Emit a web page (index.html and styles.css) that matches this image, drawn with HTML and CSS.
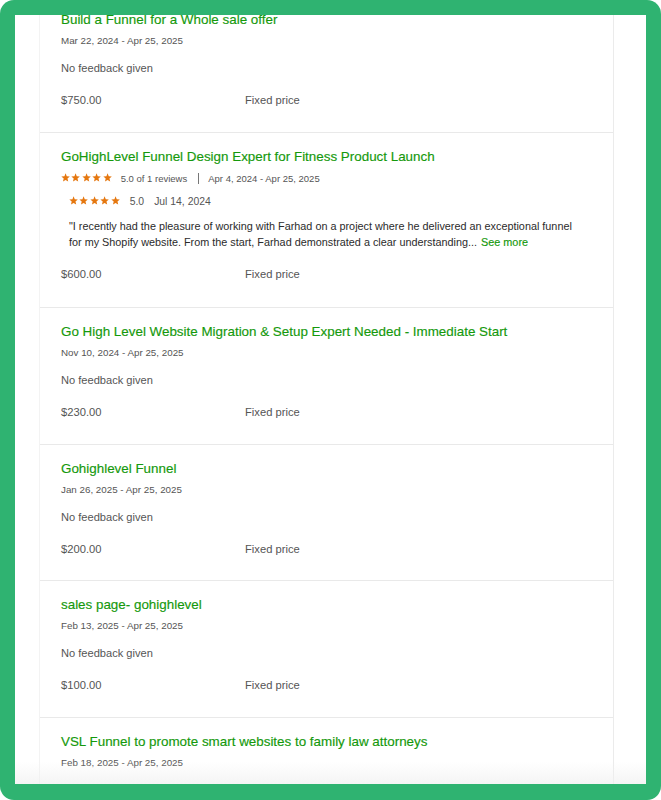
FILE: index.html
```html
<!DOCTYPE html>
<html lang="en">
<head>
<meta charset="utf-8">
<title>Work history</title>
<link rel="stylesheet" href="styles.css">
</head>
<body>
<div class="frame">
  <div class="viewport">
    <div class="card">
      <div class="item">
        <div class="title">Build a Funnel for a Whole sale offer</div>
        <div class="date">Mar 22, 2024 - Apr 25, 2025</div>
        <div class="feedback">No feedback given</div>
        <div class="price-row"><span class="price">$750.00</span><span class="type">Fixed price</span></div>
      </div>

      <div class="item review-item">
        <div class="title">GoHighLevel Funnel Design Expert for Fitness Product Launch</div>
        <div class="meta">
          <span class="stars">
            <svg viewBox="0 0 10 10"><polygon points="5,0.4 6.25,3.5 9.6,3.75 7.05,5.95 7.85,9.3 5,7.5 2.15,9.3 2.95,5.95 0.4,3.75 3.75,3.5"/></svg>
            <svg viewBox="0 0 10 10"><polygon points="5,0.4 6.25,3.5 9.6,3.75 7.05,5.95 7.85,9.3 5,7.5 2.15,9.3 2.95,5.95 0.4,3.75 3.75,3.5"/></svg>
            <svg viewBox="0 0 10 10"><polygon points="5,0.4 6.25,3.5 9.6,3.75 7.05,5.95 7.85,9.3 5,7.5 2.15,9.3 2.95,5.95 0.4,3.75 3.75,3.5"/></svg>
            <svg viewBox="0 0 10 10"><polygon points="5,0.4 6.25,3.5 9.6,3.75 7.05,5.95 7.85,9.3 5,7.5 2.15,9.3 2.95,5.95 0.4,3.75 3.75,3.5"/></svg>
            <svg viewBox="0 0 10 10"><polygon points="5,0.4 6.25,3.5 9.6,3.75 7.05,5.95 7.85,9.3 5,7.5 2.15,9.3 2.95,5.95 0.4,3.75 3.75,3.5"/></svg>
          </span>
          <span class="score">5.0 of 1 reviews</span>
          <span class="divider"></span>
          <span class="meta-date">Apr 4, 2024 - Apr 25, 2025</span>
        </div>
        <div class="review">
          <div class="review-meta">
            <span class="stars">
              <svg viewBox="0 0 10 10"><polygon points="5,0.4 6.25,3.5 9.6,3.75 7.05,5.95 7.85,9.3 5,7.5 2.15,9.3 2.95,5.95 0.4,3.75 3.75,3.5"/></svg>
              <svg viewBox="0 0 10 10"><polygon points="5,0.4 6.25,3.5 9.6,3.75 7.05,5.95 7.85,9.3 5,7.5 2.15,9.3 2.95,5.95 0.4,3.75 3.75,3.5"/></svg>
              <svg viewBox="0 0 10 10"><polygon points="5,0.4 6.25,3.5 9.6,3.75 7.05,5.95 7.85,9.3 5,7.5 2.15,9.3 2.95,5.95 0.4,3.75 3.75,3.5"/></svg>
              <svg viewBox="0 0 10 10"><polygon points="5,0.4 6.25,3.5 9.6,3.75 7.05,5.95 7.85,9.3 5,7.5 2.15,9.3 2.95,5.95 0.4,3.75 3.75,3.5"/></svg>
              <svg viewBox="0 0 10 10"><polygon points="5,0.4 6.25,3.5 9.6,3.75 7.05,5.95 7.85,9.3 5,7.5 2.15,9.3 2.95,5.95 0.4,3.75 3.75,3.5"/></svg>
            </span>
            <span class="review-score">5.0</span>
            <span class="review-date">Jul 14, 2024</span>
          </div>
          <div class="review-text">
            <div class="line">"I recently had the pleasure of working with Farhad on a project where he delivered an exceptional funnel</div>
            <div class="line">for my Shopify website. From the start, Farhad demonstrated a clear understanding... <a class="see-more" href="#">See more</a></div>
          </div>
        </div>
        <div class="price-row"><span class="price">$600.00</span><span class="type">Fixed price</span></div>
      </div>

      <div class="item">
        <div class="title">Go High Level Website Migration &amp; Setup Expert Needed - Immediate Start</div>
        <div class="date">Nov 10, 2024 - Apr 25, 2025</div>
        <div class="feedback">No feedback given</div>
        <div class="price-row"><span class="price">$230.00</span><span class="type">Fixed price</span></div>
      </div>

      <div class="item">
        <div class="title">Gohighlevel Funnel</div>
        <div class="date">Jan 26, 2025 - Apr 25, 2025</div>
        <div class="feedback">No feedback given</div>
        <div class="price-row"><span class="price">$200.00</span><span class="type">Fixed price</span></div>
      </div>

      <div class="item">
        <div class="title">sales page- gohighlevel</div>
        <div class="date">Feb 13, 2025 - Apr 25, 2025</div>
        <div class="feedback">No feedback given</div>
        <div class="price-row"><span class="price">$100.00</span><span class="type">Fixed price</span></div>
      </div>

      <div class="item">
        <div class="title">VSL Funnel to promote smart websites to family law attorneys</div>
        <div class="date">Feb 18, 2025 - Apr 25, 2025</div>
        <div class="feedback">No feedback given</div>
        <div class="price-row"><span class="price">$150.00</span><span class="type">Fixed price</span></div>
      </div>
    </div>
    <div class="fade"></div>
  </div>
</div>
</body>
</html>
```

FILE: styles.css
```css
* { box-sizing: border-box; }

html, body {
  margin: 0;
  padding: 0;
  background: #ffffff;
}

body {
  font-family: "Liberation Sans", Arial, sans-serif;
  color: #222;
}

.frame {
  width: 661px;
  height: 800px;
  background: #2fb371;
  border-radius: 14px;
  padding: 15px 15px 16px 15px;
}

.viewport {
  position: relative;
  height: 769px;
  background: #ffffff;
  overflow: hidden;
}

.card {
  margin-top: -20px;
  margin-left: 24px;
  width: 575px;
  border-left: 1px solid #f3f3f3;
  border-right: 1px solid #ebebeb;
}

.item {
  border-top: 1px solid #e9e9e9;
  padding: 14px 21px 22.6px 21px;
}

.item:first-child {
  padding-bottom: 23px;
}

.review-item {
  padding-bottom: 24px;
}

.title {
  font-size: 13.4px;
  line-height: 20px;
  color: #15990c;
  white-space: nowrap;
  -webkit-text-stroke: 0.15px #15990c;
}

.date {
  margin-top: 3px;
  font-size: 9.8px;
  line-height: 16px;
  color: #555;
}

.feedback {
  margin-top: 10px;
  font-size: 11.1px;
  line-height: 18px;
  color: #555;
}

.price-row {
  margin-top: 14px;
  display: flex;
  font-size: 11.2px;
  line-height: 18px;
  color: #555;
}

.review-item .price-row {
  margin-top: 15px;
}

.price {
  width: 184px;
}

.meta {
  margin-top: 3px;
  display: flex;
  align-items: center;
  height: 16px;
  font-size: 9.5px;
  color: #555;
}

.stars {
  display: flex;
  gap: 1.2px;
  align-items: center;
}

.stars svg {
  width: 9.2px;
  height: 9.2px;
  fill: #e5770f;
  display: block;
}

.score {
  margin-left: 9px;
  color: #555;
}

.divider {
  width: 1px;
  height: 11px;
  background: #777;
  margin: 0 9px 0 11px;
}

.meta-date {
  color: #555;
}

.review {
  margin-top: 7px;
  padding-left: 8px;
}

.review-meta {
  display: flex;
  align-items: center;
  height: 16px;
  font-size: 10.4px;
  color: #555;
}

.review-score {
  margin-left: 10px;
}

.review-date {
  margin-left: 10px;
}

.review-text {
  margin-top: 9px;
  font-size: 10.83px;
  line-height: 16px;
  color: #2b2b2b;
}

.line {
  white-space: nowrap;
}

.see-more {
  color: #15990c;
  text-decoration: none;
  margin-left: 1px;
  -webkit-text-stroke: 0.15px #15990c;
}

.fade {
  position: absolute;
  left: 0;
  right: 0;
  bottom: 0;
  height: 22px;
  background: linear-gradient(to bottom, rgba(255,255,255,0), rgba(240,240,240,0.7));
}
```
